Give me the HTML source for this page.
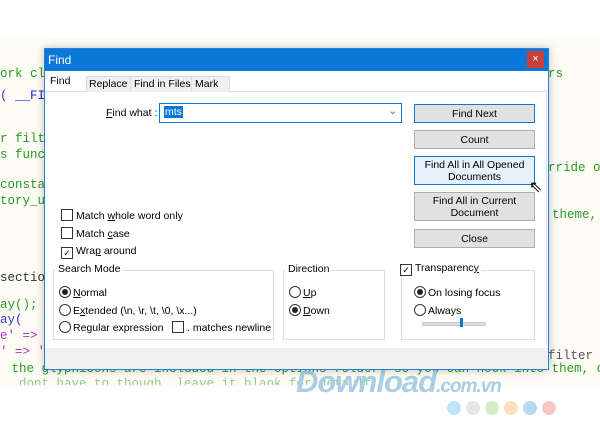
<!DOCTYPE html><html><head><style>
body{margin:0;width:600px;height:438px;background:#fff;position:relative;overflow:hidden;font-family:"Liberation Sans",sans-serif;font-size:10.5px;color:#000}
.bg{position:absolute;left:0;top:37px;width:600px;height:350px;background:#fdfcf4}
.c{position:absolute;font-family:"Liberation Mono",monospace;font-size:12.5px;color:#2a9a2a;white-space:pre}
.dlg{position:absolute;left:44px;top:48px;width:503px;height:320px;background:#fff;border:1px solid #2b7fd6;box-shadow:0 0 8px rgba(0,0,0,.25)}
.tb{height:22px;background:#0a78d7;color:#fff;font-size:12px;line-height:22px;padding-left:3px}
.x{position:absolute;right:4px;top:2px;width:17px;height:17px;background:#c9403a;color:#fff;text-align:center;line-height:16px;font-size:11px}
.a{position:absolute;white-space:nowrap}
.btn{position:absolute;left:369px;width:119px;background:#e1e1e1;border:1px solid #adadad;text-align:center;font-size:10.5px;line-height:12px;display:flex;align-items:center;justify-content:center}
.cb{display:inline-block;width:10px;height:10px;border:1px solid #333;background:#fff;vertical-align:-2px;margin-right:3px;position:relative;font-size:9px;line-height:10px;text-align:center}
.rd{display:inline-block;width:10px;height:10px;border:1px solid #333;border-radius:50%;background:#fff;vertical-align:-2px;margin-right:2px;position:relative}
.rd.on:after{content:"";position:absolute;left:2px;top:2px;width:6px;height:6px;border-radius:50%;background:#222}
.grp{position:absolute;border:1px solid #dcdcdc}
.gl{position:absolute;background:#fff;padding:0 2px;top:-8px;left:2px;white-space:nowrap}
</style></head><body>
<div class="bg"></div>
<div class="c" style="left:0;top:67px">ork cl</div>
<div class="c" style="left:0;top:89px;color:#33c">( <span style="color:#22c">__FI</span></div>
<div class="c" style="left:0;top:132px">r filt</div>
<div class="c" style="left:0;top:148px">s func</div>
<div class="c" style="left:0;top:178px">constan</div>
<div class="c" style="left:0;top:194px">tory_ur</div>
<div class="c" style="left:0;top:271px;color:#333">section</div>
<div class="c" style="left:0;top:298px">ay();</div>
<div class="c" style="left:0;top:313px;color:#33c">ay(</div>
<div class="c" style="left:0;top:329px;color:#a3c">e' =></div>
<div class="c" style="left:0;top:345px;color:#a3c">' => '</div>
<div class="c" style="left:4px;top:362px"> the glyphicons are included in the options folder, so you can hook into them, or l</div>
<div class="c" style="left:4px;top:377px;opacity:.5;height:8px;overflow:hidden">  dont have to though, leave it blank for default</div>
<div class="c" style="left:548px;top:67px">rs</div>
<div class="c" style="left:548px;top:161px">rride o</div>
<div class="c" style="left:552px;top:208px">theme,</div>
<div class="c" style="left:548px;top:349px;color:#555">filter t</div>
<div class="a" style="left:296px;top:364px;font:italic bold 31px 'Liberation Sans',sans-serif;color:#a9cfe8;letter-spacing:-1px">Download<span style="font-size:19px">.com.vn</span></div>
<div class="a" style="left:447px;top:401px;display:flex;gap:5px">
<i style="width:14px;height:14px;border-radius:50%;background:#bfe4f7"></i><i style="width:14px;height:14px;border-radius:50%;background:#e6e6e6"></i><i style="width:14px;height:14px;border-radius:50%;background:#d6ecc8"></i><i style="width:14px;height:14px;border-radius:50%;background:#fbe1bf"></i><i style="width:14px;height:14px;border-radius:50%;background:#b9d9f0"></i><i style="width:14px;height:14px;border-radius:50%;background:#f8c5c8"></i></div>
<div class="dlg">
<div class="tb">Find<div class="x">×</div></div>
<div class="a" style="left:0;top:22px;width:503px;height:20px;background:#fff;border-bottom:1px solid #dcdcdc"></div>
<div class="a" style="left:5px;top:26px">Find</div>
<div class="a" style="left:41px;top:27px;height:15px;width:142px;background:#f0f0f0;border:1px solid #dcdcdc;border-bottom:0"></div>
<div class="a" style="left:44px;top:29px">Replace</div>
<div class="a" style="left:85px;top:27px;height:15px;border-left:1px solid #dcdcdc"></div>
<div class="a" style="left:89px;top:29px">Find in Files</div>
<div class="a" style="left:146px;top:27px;height:15px;border-left:1px solid #dcdcdc"></div>
<div class="a" style="left:150px;top:29px">Mark</div>
<div class="a" style="left:0;top:43px;width:501px;height:254px;border-right:1px solid #dcdcdc"></div>
<div class="a" style="left:61px;top:58px"><u>F</u>ind what :</div>
<div class="a" style="left:114px;top:54px;width:241px;height:18px;border:1px solid #0a78d7"><span style="position:absolute;left:4px;top:2px;background:#0a78d7;color:#fff;padding:0 1px">mts</span><span style="position:absolute;right:4px;top:1px;color:#666">⌄</span></div>
<div class="btn" style="top:55px;height:17px;border:1px solid #0a78d7">Find Next</div>
<div class="btn" style="top:81px;height:17px">Count</div>
<div class="btn" style="top:107px;height:27px;background:#e5f1fb;border-color:#0a78d7">Find All in All Opened<br>Documents</div>
<div class="btn" style="top:143px;height:27px">Find All in Current<br>Document</div>
<div class="btn" style="top:180px;height:17px">Close</div>
<div class="a" style="left:484px;top:128px;font-size:16px">⇖</div>
<div class="a" style="left:16px;top:160px"><span class="cb"></span>Match <u>w</u>hole word only</div>
<div class="a" style="left:16px;top:178px"><span class="cb"></span>Match <u>c</u>ase</div>
<div class="a" style="left:16px;top:196px"><span class="cb">✓</span>Wra<u>p</u> around</div>
<div class="grp" style="left:8px;top:221px;width:219px;height:68px"><span class="gl">Search Mode</span>
<div class="a" style="left:5px;top:15px"><span class="rd on"></span><u>N</u>ormal</div>
<div class="a" style="left:5px;top:33px"><span class="rd"></span>E<u>x</u>tended (\n, \r, \t, \0, \x...)</div>
<div class="a" style="left:5px;top:50px"><span class="rd"></span>Re<u>g</u>ular expression</div>
<div class="a" style="left:118px;top:50px"><span class="cb"></span>. matches newline</div></div>
<div class="grp" style="left:238px;top:221px;width:100px;height:68px"><span class="gl">Direction</span>
<div class="a" style="left:5px;top:15px"><span class="rd"></span><u>U</u>p</div>
<div class="a" style="left:5px;top:33px"><span class="rd on"></span><u>D</u>own</div></div>
<div class="grp" style="left:356px;top:221px;width:132px;height:68px"><span class="gl" style="left:-4px;top:-9px"><span class="cb">✓</span>Transparenc<u>y</u></span>
<div class="a" style="left:12px;top:15px"><span class="rd on"></span>On losing focus</div>
<div class="a" style="left:12px;top:33px"><span class="rd"></span>Always</div>
<div class="a" style="left:20px;top:51px;width:62px;height:2px;background:#ddd;border:1px solid #ccc"></div>
<div class="a" style="left:58px;top:47px;width:3px;height:9px;background:#0a78d7"></div></div>
<div class="a" style="left:0;top:299px;width:503px;height:21px;background:#f0f0f0"></div>
</div>
</body></html>
